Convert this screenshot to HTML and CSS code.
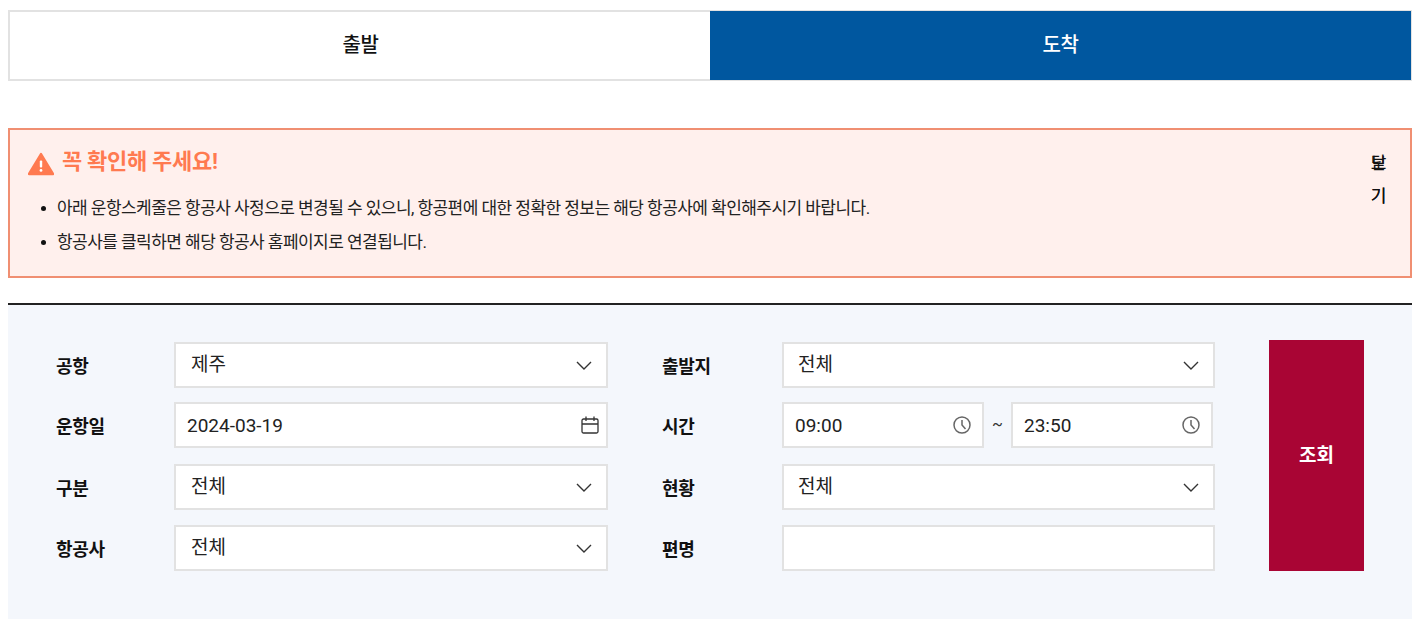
FILE: index.html
```html
<!DOCTYPE html>
<html lang="ko">
<head>
<meta charset="utf-8">
<title>운항스케줄</title>
<link rel="stylesheet" href="styles.css">
</head>
<body>
<div class="tabs">
  <a class="tab">출발</a>
  <a class="tab active">도착</a>
</div>
<section class="notice">
  <h2 class="notice-title">
    <svg class="warn" viewBox="0 0 26 24" width="26" height="24"><path d="M13 2 L25 22 H1 Z" fill="#ff7a50" stroke="#ff7a50" stroke-width="2.4" stroke-linejoin="round"/><rect x="11.8" y="8.5" width="2.4" height="7" rx="1" fill="#fff"/><circle cx="13" cy="18.4" r="1.4" fill="#fff"/></svg>
    <span>꼭 확인해 주세요!</span>
  </h2>
  <ul class="notice-list">
    <li>아래 운항스케줄은 항공사 사정으로 변경될 수 있으니, 항공편에 대한 정확한 정보는 해당 항공사에 확인해주시기 바랍니다.</li>
    <li>항공사를 클릭하면 해당 항공사 홈페이지로 연결됩니다.</li>
  </ul>
  <div class="toggle"><span class="toggle-text">닫기</span><span class="toggle-text over">보기</span></div>
</section>
<form class="search">
  <label class="lbl">공항</label>
  <div class="field select"><span>제주</span><svg class="chev" viewBox="0 0 16 9" width="16" height="9"><path d="M1 1l7 7 7-7" fill="none" stroke="#333" stroke-width="1.4"/></svg></div>
  <label class="lbl lbl-right">출발지</label>
  <div class="field select select-right"><span>전체</span><svg class="chev" viewBox="0 0 16 9" width="16" height="9"><path d="M1 1l7 7 7-7" fill="none" stroke="#333" stroke-width="1.4"/></svg></div>
  <button class="submit" type="button">조회</button>

  <label class="lbl">운항일</label>
  <div class="field date"><span>2024-03-19</span><svg class="cal" viewBox="0 0 20 20" width="20" height="20"><path d="M3.5 4h13a1.5 1.5 0 0 1 1.5 1.5v11a1.5 1.5 0 0 1-1.5 1.5h-13A1.5 1.5 0 0 1 2 16.5v-11A1.500 1.500 0 0 1 3.500 4zM2 9h16M6 1.500V6M14 1.500V6" fill="none" stroke="#333" stroke-width="1.300"/></svg></div>
  <label class="lbl lbl-right">시간</label>
  <div class="times">
    <div class="field date time"><span>09:00</span><svg class="clock" viewBox="0 0 20 20" width="20" height="20"><circle cx="10" cy="10" r="8" fill="none" stroke="#666" stroke-width="1.500"/><path d="M10 5v5l3.500 4" fill="none" stroke="#666" stroke-width="1.500"/></svg></div>
    <span class="tilde">~</span>
    <div class="field date time"><span>23:50</span><svg class="clock" viewBox="0 0 20 20" width="20" height="20"><circle cx="10" cy="10" r="8" fill="none" stroke="#666" stroke-width="1.500"/><path d="M10 5v5l3.500 4" fill="none" stroke="#666" stroke-width="1.500"/></svg></div>
  </div>

  <label class="lbl">구분</label>
  <div class="field select"><span>전체</span><svg class="chev" viewBox="0 0 16 9" width="16" height="9"><path d="M1 1l7 7 7-7" fill="none" stroke="#333" stroke-width="1.4"/></svg></div>
  <label class="lbl lbl-right">현황</label>
  <div class="field select select-right"><span>전체</span><svg class="chev" viewBox="0 0 16 9" width="16" height="9"><path d="M1 1l7 7 7-7" fill="none" stroke="#333" stroke-width="1.4"/></svg></div>

  <label class="lbl">항공사</label>
  <div class="field select"><span>전체</span><svg class="chev" viewBox="0 0 16 9" width="16" height="9"><path d="M1 1l7 7 7-7" fill="none" stroke="#333" stroke-width="1.4"/></svg></div>
  <label class="lbl lbl-right">편명</label>
  <div class="field"></div>
</form>
</body>
</html>
```
FILE: styles.css
```css
* { box-sizing: border-box; }
html, body { margin: 0; padding: 0; background: #fff; }
body {
  padding: 10px 8px 0;
  font-family: Roboto, "Noto Sans CJK KR", sans-serif;
  color: #111;
  overflow: hidden;
}
.tabs {
  display: flex;
  height: 71px;
  border: 2px solid #e2e2e2;
}
.tab {
  flex: 1 1 0;
  display: flex;
  align-items: center;
  justify-content: center;
  font-size: 20px;
  font-weight: 500;
  letter-spacing: -0.3px;
  padding-bottom: 4px;
  color: #111;
}
.tab.active {
  background: #00579f;
  color: #fff;
  margin: -1px -1px -1px -1px;
}
.notice {
  position: relative;
  margin-top: 47px;
  height: 150px;
  border: 2px solid #f08f72;
  background: #fff0ed;
  padding: 17px 18px 0;
}
.notice-title {
  display: flex;
  align-items: center;
  gap: 8px;
  margin: 0;
  font-size: 22px;
  line-height: 30px;
  font-weight: 700;
  letter-spacing: -0.3px;
  color: #ff7a50;
}
.warn { display: block; margin-top: 3px; }
.notice-list {
  list-style: none;
  margin: 19px 0 0;
  padding: 0 0 0 11px;
  font-size: 17px;
  letter-spacing: -0.55px;
  color: #222;
}
.notice-list li {
  position: relative;
  padding-left: 18px;
  line-height: 24px;
  margin-bottom: 10px;
}
.notice-list li::before {
  content: "";
  position: absolute;
  left: 2px;
  top: 10px;
  width: 5px;
  height: 5px;
  border-radius: 50%;
  background: #111;
}
.toggle {
  position: absolute;
  right: 23px;
  top: 17px;
  width: 17px;
  font-size: 17px;
  line-height: 33px;
  text-align: center;
  color: #111;
}
.toggle-text { display: block; }
.toggle-text.over { position: absolute; top: 0; left: 0; width: 17px; }
.search {
  margin-top: 25px;
  border-top: 2px solid #222;
  background: #f4f7fc;
  height: 316px;
  padding: 37px 48px 0;
  display: grid;
  grid-template-columns: 118px 434px 174px 433px 149px;
  grid-template-rows: 60px 62px 61px 46px;
}
.lbl {
  font-size: 18px;
  font-weight: 700;
  letter-spacing: -0.3px;
  height: 46px;
  display: flex;
  align-items: center;
  color: #111;
}
.lbl-right { padding-left: 54px; }
.field {
  height: 46px;
  background: #fff;
  border: 2px solid #e2e2e2;
  display: flex;
  align-items: center;
  justify-content: space-between;
  font-size: 19px;
  color: #222;
}
.select { padding: 0 14px 6px 15px; }
.select-right { padding-left: 14px; }
.date { padding: 0 6px 0 11px; }
.chev { margin-top: 6px; }
.times {
  display: flex;
  align-items: flex-start;
}
.time { width: 202px; flex: none; padding-right: 10px; }
.tilde {
  width: 27px;
  text-align: center;
  line-height: 46px;
  font-size: 16px;
  color: #333;
}
.submit {
  grid-column: 5;
  grid-row: 1 / span 4;
  margin: -2px 0 0 54px;
  width: 95px;
  height: 231px;
  border: 0;
  background: #a90534;
  color: #fff;
  font: 700 19px Roboto, "Noto Sans CJK KR", sans-serif;
  padding: 0 0 4px;
}
```
